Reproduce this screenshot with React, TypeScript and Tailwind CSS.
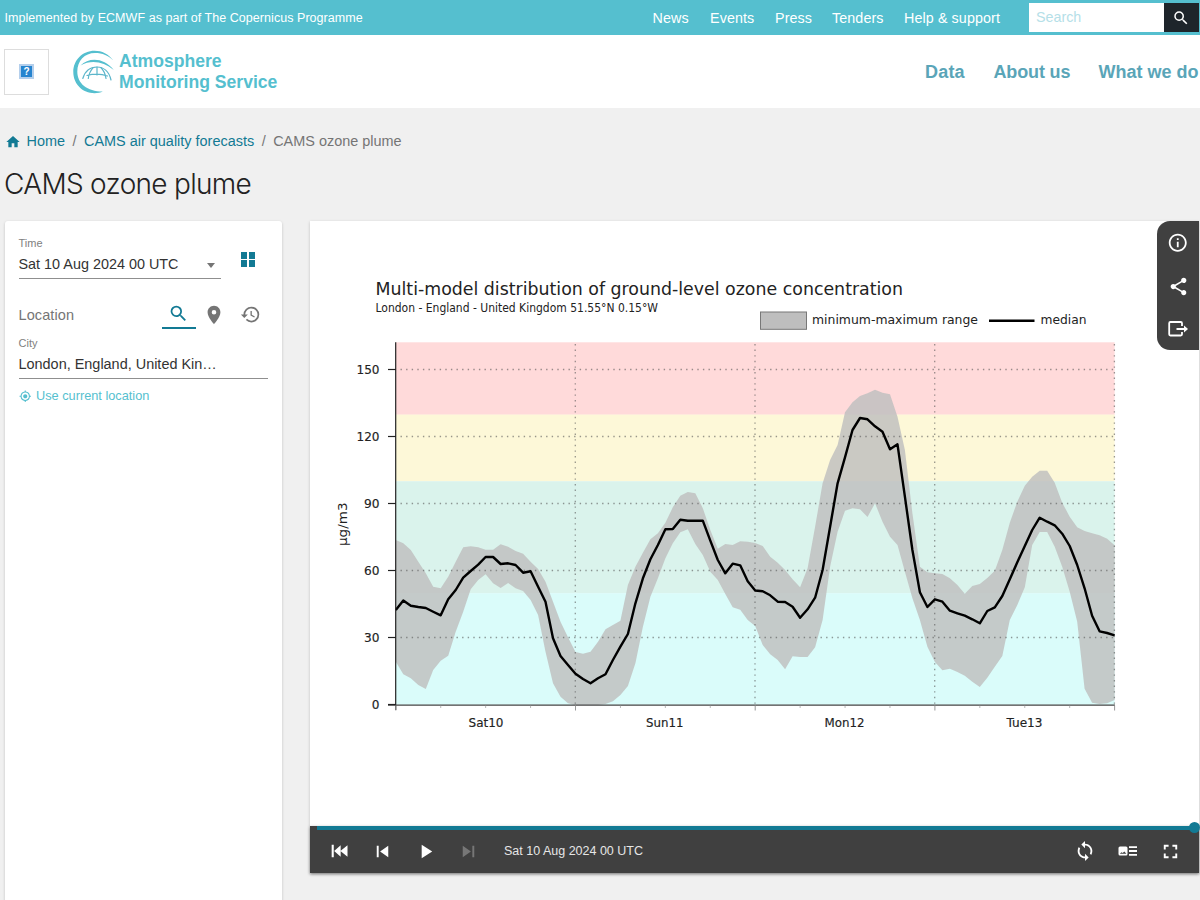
import React from 'react';
import {
  MdFullscreen,
  MdHistory,
  MdHome,
  MdInfoOutline,
  MdMyLocation,
  MdPlace,
  MdPlayArrow,
  MdSearch,
  MdShare,
  MdSkipNext,
  MdSkipPrevious,
  MdSync,
} from 'react-icons/md';

// Hourly plume, as vertical positions on the plot
const MAX = [
  540, 543.3, 550, 561.7, 573.3, 586.7, 588.3, 576.7, 561.7, 547.3, 546.3, 547.3, 549.7, 549.7, 544.3, 546.7,
  551, 553.7, 561.7, 569, 581.7, 601.7, 621.7, 637.3, 652, 653.7, 651.7, 641.7, 629.3, 625, 620.7, 585,
  566.7, 552.7, 539.3, 533.3, 522.7, 507.3, 495.7, 492, 493.3, 508.3, 530, 548.7, 544, 545, 541.3, 541.7,
  543, 546, 556.7, 562.7, 570, 579.3, 587.3, 568.3, 526.7, 483.3, 460, 445, 412.3, 402.3, 396, 393.3,
  389.7, 392.7, 394.3, 416.7, 450, 513.3, 566.7, 572.3, 573.3, 574, 578.3, 585, 593.7, 586, 584, 578,
  570.7, 550, 522.7, 501.7, 485.7, 476.7, 470.7, 470.7, 482.7, 502.7, 516.7, 527.3, 531, 533.3, 535.3, 538.7,
  545.3,
];

const MEDIAN = [
  610, 600.5, 605.7, 607, 608, 611.7, 615.3, 599.3, 590, 577.7, 571, 564.7, 557, 557, 564, 563.3,
  565, 572.7, 571.3, 586.7, 601.7, 638.3, 656, 665, 673.7, 679, 683.3, 678.3, 674.3, 660, 646.7, 634,
  603.3, 578.3, 559.3, 545, 529.3, 529, 519.7, 520.7, 520.7, 520.7, 540.7, 560, 573.3, 563.7, 565.3, 581.3,
  590.5, 591.3, 595.3, 601.7, 602, 606.7, 617.7, 609.3, 597.7, 570, 526.7, 483.3, 457.3, 430, 418, 419.3,
  426.3, 431.7, 449.3, 444.3, 496.7, 550, 592.3, 607, 599.3, 601.7, 610.7, 613.3, 615.7, 619.3, 623.3, 611,
  607.3, 596, 579.3, 562.3, 546, 530, 517.7, 521.7, 525.3, 533.7, 546, 565, 588.3, 615.7, 631.3, 633,
  635.3,
];

const MIN = [
  661.7, 674.3, 678.3, 685, 689, 670, 660.7, 655.7, 631.7, 611.7, 589.3, 580, 574.3, 583.3, 588, 583,
  588.3, 591, 600, 615, 651.7, 683.3, 696.7, 703.3, 705, 705, 705, 705, 704, 701.3, 695, 686,
  663.3, 626.7, 596.7, 578.3, 558.3, 543.3, 532.3, 529.3, 544, 555, 571.7, 580, 594, 607.3, 609.7, 620,
  626, 645, 654.3, 660, 669.3, 656.3, 657, 657, 647.3, 620, 566.7, 531.7, 510.7, 508.3, 509.3, 517,
  503.3, 521.7, 536.7, 545, 571.7, 598.3, 620, 646.7, 662, 670.3, 668.7, 672, 675.7, 681.7, 687, 677.7,
  666.7, 656, 620, 605, 587.3, 545, 532, 532, 546.7, 566.7, 591.7, 621.7, 688.7, 702.7, 704, 703.3,
  700,
];

const X0 = 395.8;
const DAY = 179.7;
const px = (i: number) => (X0 + (i * DAY) / 24).toFixed(1);
const points = (ys: number[]) => ys.map((y, i) => `${px(i)},${y}`);

const BAND = [...points(MAX), ...points(MIN).reverse()].join(' ');

const TICKS = [
  { label: '150', y: 369.8, w: 23 },
  { label: '120', y: 436.8, w: 23 },
  { label: '90', y: 503.8, w: 15.5 },
  { label: '60', y: 570.8, w: 15.5 },
  { label: '30', y: 637.8, w: 15.5 },
  { label: '0', y: 704.8, w: 7.7 },
];

const DAYS = [
  { label: 'Sat10', x: 468.5, w: 35 },
  { label: 'Sun11', x: 646, w: 37.5 },
  { label: 'Mon12', x: 824.5, w: 40 },
  { label: 'Tue13', x: 1006.5, w: 36 },
];

const Chart: React.FC = () => (
  <svg
    viewBox="310 221 889 605"
    className="block w-[889px] h-[605px] font-['DejaVu_Sans',sans-serif]"
    fill="#222"
  >
    <text x="375.5" y="294.5" fontSize="18.5" textLength="527.5" lengthAdjust="spacingAndGlyphs">
      Multi-model distribution of ground-level ozone concentration
    </text>
    <text x="375.5" y="311.8" fontSize="11.5" textLength="282.5" lengthAdjust="spacingAndGlyphs">
      London - England - United Kingdom 51.55°N 0.15°W
    </text>

    {/* Legend */}
    <rect x="760.5" y="312" width="46" height="17.3" fill="#bebebe" stroke="#777" />
    <text x="812" y="324.3" fontSize="12.5" textLength="166" lengthAdjust="spacingAndGlyphs">
      minimum-maximum range
    </text>
    <path d="M989 320.7H1034.5" stroke="#000" strokeWidth="2.6" />
    <text x="1040.5" y="324.3" fontSize="12.5" textLength="46" lengthAdjust="spacingAndGlyphs">
      median
    </text>

    {/* Threshold bands */}
    <rect x="396" y="342.3" width="718.6" height="72.5" fill="#ffdada" />
    <rect x="396" y="414.6" width="718.6" height="66.6" fill="#fdf8d8" />
    <rect x="396" y="481.2" width="718.6" height="112.2" fill="#daf3ec" />
    <rect x="396" y="593.2" width="718.6" height="111.6" fill="#dafcfa" />

    <polygon points={BAND} fill="#bebebe" fillOpacity="0.82" />

    {/* Dotted grid */}
    <g stroke="#555" strokeOpacity="0.6" strokeWidth="1.3" strokeDasharray="1.4 4.2">
      {TICKS.slice(0, 5).map((t) => (
        <path key={t.label} d={`M400.5 ${t.y - 0.3}H1114`} />
      ))}
      {[1, 2, 3, 4].map((d) => (
        <path key={d} d={`M${X0 + d * DAY - 0.2} 344V704`} />
      ))}
    </g>

    <polyline points={points(MEDIAN).join(' ')} fill="none" stroke="#000" strokeWidth="2.4" strokeLinejoin="round" />

    {/* Axes */}
    <path d="M395.7 342.3V710" stroke="#222" strokeWidth="1.2" />
    <path d="M388 705.1H1115" stroke="#444" strokeWidth="1.1" />
    {TICKS.map((t) => (
      <g key={t.label}>
        <path d={`M388 ${t.y - 0.3}H396`} stroke="#222" strokeWidth="1.2" />
        <text
          x={379.5 - t.w}
          y={t.y + 4.1}
          fontSize="12"
          textLength={t.w}
          lengthAdjust="spacingAndGlyphs"
          stroke="#222"
          strokeWidth="0.15"
        >
          {t.label}
        </text>
      </g>
    ))}
    {Array.from({ length: 17 }, (_, i) => (
      <path
        key={i}
        d={`M${X0 + (i * DAY) / 4} 705.5v${i % 4 === 0 ? 5 : 2.5}`}
        stroke="#999"
        strokeWidth={i % 4 === 0 ? 1 : 0.7}
      />
    ))}
    {DAYS.map((d) => (
      <text
        key={d.label}
        x={d.x}
        y="727.4"
        fontSize="11.8"
        textLength={d.w}
        lengthAdjust="spacingAndGlyphs"
        stroke="#222"
        strokeWidth="0.15"
      >
        {d.label}
      </text>
    ))}
    <text
      transform="translate(346.6 546) rotate(-90)"
      fontSize="12.5"
      textLength="43.5"
      lengthAdjust="spacingAndGlyphs"
    >
      µg/m3
    </text>
  </svg>
);

const Logo: React.FC = () => (
  <svg viewBox="0 0 42 44" className="w-[42px] h-[44px]" fill="none">
    <path
      d="M40.3 10.5C35.5 4 29 .8 21.5 .8C9.5 .8 .3 10.2 .3 22C.3 34 9.5 43.2 21.5 43.2C25 43.2 27.5 42.6 29.8 41.6C14 41.5 4.3 33.5 4.3 21.5C4.3 11 11.5 2.9 22 2.9C29.5 2.9 35.5 5.5 40.3 10.5Z"
      fill="#55bfcf"
    />
    <path d="M7.5 15.5C16 7 31 7.5 40.8 20C30.5 11.5 18 9.5 7.5 15.5Z" fill="#55bfcf" />
    <g stroke="#5cb6cb" strokeWidth="1.2" strokeLinecap="round">
      <path d="M9.8 28.5C12 21 17.5 17 24 17C30.5 17 36 21.5 38 30" />
      <path d="M14 25.5C20.5 23.8 28 23.8 34.5 26M24 17V25M20 17.8C17.500 20.500 15.800 24 15.300 28.500M28 17.800C30.800 20.500 32.300 24 33 28.500" />
    </g>
  </svg>
);

const SkipFirst: React.FC = () => (
  <svg viewBox="0 0 24 24" className="size-5" fill="currentColor">
    <path d="M21 5v14L12.5 12zM4.5 4.5v15H2v-15zM12.800 5v14L5 12z" />
  </svg>
);

const LegendToggle: React.FC = () => (
  <svg viewBox="0 0 20 12" className="w-5 h-3" fill="currentColor">
    <path
      fillRule="evenodd"
      d="M2 1.500h6a1.500 1.500 0 0 1 1.500 1.500v6a1.500 1.500 0 0 1-1.500 1.500H2A1.500 1.500 0 0 1 .5 9V3A1.500 1.500 0 0 1 2 1.500zM1.800 8.800h6.600L6.300 6.500 4.700 8 3.500 7.200z"
    />
    <path d="M11 1.300h8v1.800h-8zM11 5.100h8v1.800h-8zM11 8.900h8v1.800h-8z" />
  </svg>
);

const ExportIcon: React.FC = () => (
  <svg viewBox="0 0 20 18" className="w-5 h-[18px]" fill="none" stroke="currentColor" strokeWidth="1.8">
    <path d="M14 6V3.200A1.200 1.200 0 0 0 12.800 2H2.400A1.200 1.200 0 0 0 1.200 3.200V14.300A1.200 1.200 0 0 0 2.400 15.500H12.800A1.200 1.200 0 0 0 14 14.300V12M8.500 9H17" />
    <path d="M16 5.600L20 9L16 12.400Z" fill="currentColor" stroke="none" />
  </svg>
);

const TopBar: React.FC = () => (
  <div className="h-[35px] bg-[#55bfcf] flex items-center text-white shrink-0">
    <span className="pl-[4.5px] pt-0.5 text-[12.5px] w-[652.5px] tracking-[0.05px] whitespace-nowrap">
      Implemented by ECMWF as part of The Copernicus Programme
    </span>
    <nav className="flex text-[14.3px] pt-0.5 whitespace-nowrap tracking-[0.1px]">
      <a className="w-[57.5px]">News</a>
      <a className="w-[65px]">Events</a>
      <a className="w-[57px]">Press</a>
      <a className="w-[72px]">Tenders</a>
      <a className="w-[125px]">Help &amp; support</a>
    </nav>
    <div className="w-[134.5px] h-[29px] bg-white text-[#b5e0e8] text-[14.3px] pl-[7px] pt-px flex items-center">
      Search
    </div>
    <div className="w-[35.500px] h-[29px] bg-[#1e252b] flex items-center justify-center">
      <MdSearch className="size-[18px]" />
    </div>
  </div>
);

const Header: React.FC = () => (
  <header className="h-[73px] bg-white flex items-center shrink-0 font-bold">
    <div className="ml-1 w-[45px] h-[46px] border border-[#ddd] flex items-center justify-center">
      <div className="size-[15px] border-2 border-[#b4cfec] bg-[#2684cf] text-white text-[10px] leading-none flex items-center justify-center">
        ?
      </div>
    </div>
    <div className="ml-6 w-[45px]">
      <Logo />
    </div>
    <div className="text-[#55bfcf] text-[17.6px] leading-[21px] w-[806px] ml-px">
      Atmosphere
      <br />
      Monitoring Service
    </div>
    <nav className="flex pt-0.5 text-[18px] text-[#5aa5b8] whitespace-nowrap">
      <a className="w-[68.5px] tracking-[0.2px]">Data</a>
      <a className="w-[105px] tracking-[-0.15px]">About us</a>
      <a>What we do</a>
    </nav>
  </header>
);

const Sidebar: React.FC = () => (
  <aside className="w-[277px] h-[690px] bg-white rounded-[3px] shadow-[0_1px_3px_rgba(0,0,0,0.2)] pl-[13.5px] pr-[14.5px] text-[#333]">
    <div className="flex pt-4">
      <div className="w-[202px] border-b border-[#8f8f8f] h-[42px]">
        <div className="text-[11px] leading-3 text-[#808080]">Time</div>
        <div className="mt-1 flex items-center justify-between text-[14.4px] leading-[22px]">
          <span>Sat 10 Aug 2024 00 UTC</span>
          <span className="mr-[6px] mt-0.5 border-x-[4.5px] border-x-transparent border-t-[5px] border-t-[#757575]" />
        </div>
      </div>
      <div className="ml-5 mt-[15px] grid grid-cols-2 gap-[1.5px] size-[14.5px]">
        <span className="bg-[#127a94]" />
        <span className="bg-[#127a94]" />
        <span className="bg-[#127a94]" />
        <span className="bg-[#127a94]" />
      </div>
    </div>

    <div className="mt-[20px] flex h-[30px] text-[#757575]">
      <span className="w-[143px] text-[14.5px] leading-[32px] tracking-[0.1px]">Location</span>
      <span className="w-[34px] border-b-2 border-[#127a94] flex items-center justify-center text-[#127a94]">
        <MdSearch className="size-[21px]" />
      </span>
      <span className="w-[37px] pt-px flex items-center justify-center">
        <MdPlace className="size-[22px]" />
      </span>
      <span className="w-[35px] flex items-center justify-center">
        <MdHistory className="size-[21px]" />
      </span>
    </div>

    <div className="mt-[8px] h-[42px] border-b border-[#8f8f8f]">
      <div className="text-[11px] leading-[13px] text-[#808080]">City</div>
      <div className="mt-[2px] text-[14.45px] leading-[24px]">London, England, United Kin…</div>
    </div>
    <div className="mt-[9px] flex items-center gap-[5px] text-[12.75px] leading-4 text-[#55bfcf]">
      <MdMyLocation className="size-[12.5px]" />
      <span>Use current location</span>
    </div>
  </aside>
);

const Player: React.FC = () => (
  <div className="relative h-[47px] bg-[#404040] text-white flex items-center pt-[3px] shadow-[0_1px_3px_rgba(0,0,0,0.4)]">
    <div className="absolute left-[7px] right-0 top-0 h-1 bg-[#127a94]" />
    <div className="absolute -right-px -top-[4px] size-[11px] rounded-full bg-[#127a94]" />
    <div className="flex items-center w-[194px]">
      <span className="ml-[19.5px] w-[41.5px]">
        <SkipFirst />
      </span>
      <span className="w-[43px]">
        <MdSkipPrevious className="size-[23px]" />
      </span>
      <span className="w-[43px]">
        <MdPlayArrow className="size-[23px]" />
      </span>
      <span className="text-[#777]">
        <MdSkipNext className="size-[23px]" />
      </span>
    </div>
    <span className="text-[12.5px] text-[#e6e6e6] flex-1 pt-px">Sat 10 Aug 2024 00 UTC</span>
    <div className="flex items-center">
      <MdSync className="size-[22px]" />
      <span className="ml-[22px]">
        <LegendToggle />
      </span>
      <MdFullscreen className="size-[23px] ml-[21.5px] mr-[17px]" />
    </div>
  </div>
);

export default function App() {
  return (
    <div className="w-[1200px] h-[900px] overflow-hidden bg-[#f0f0f0] flex flex-col font-['Liberation_Sans',Arial,sans-serif]">
      <TopBar />
      <Header />

      <div className="mt-[25px] ml-[5px] h-[18px] flex items-center text-[14.45px] text-[#127a94] whitespace-nowrap shrink-0">
        <MdHome className="size-4" />
        <span className="ml-[5.5px]">Home</span>
        <span className="mx-[7.5px] text-[#777]">/</span>
        <span>CAMS air quality forecasts</span>
        <span className="mx-[7.5px] text-[#777]">/</span>
        <span className="text-[#757575]">CAMS ozone plume</span>
      </div>

      <h1 className="mt-[15px] ml-1 h-[36px] leading-[36px] text-[28px] font-light tracking-[-0.7px] text-[#222] font-['Inter',sans-serif] shrink-0">
        CAMS ozone plume
      </h1>

      <main className="mt-[19px] ml-[5px] flex items-start gap-[28px]">
        <Sidebar />
        <section className="relative w-[889px] shadow-[0_1px_3px_rgba(0,0,0,0.2)] bg-white">
          <Chart />
          <Player />
          <div className="absolute right-0 top-0 w-[42px] h-[129px] pb-px bg-[#404040] rounded-l-[13px] text-white flex flex-col items-center justify-around">
            <MdInfoOutline className="size-[21.5px]" />
            <MdShare className="size-[21px]" />
            <ExportIcon />
          </div>
        </section>
      </main>
    </div>
  );
}
